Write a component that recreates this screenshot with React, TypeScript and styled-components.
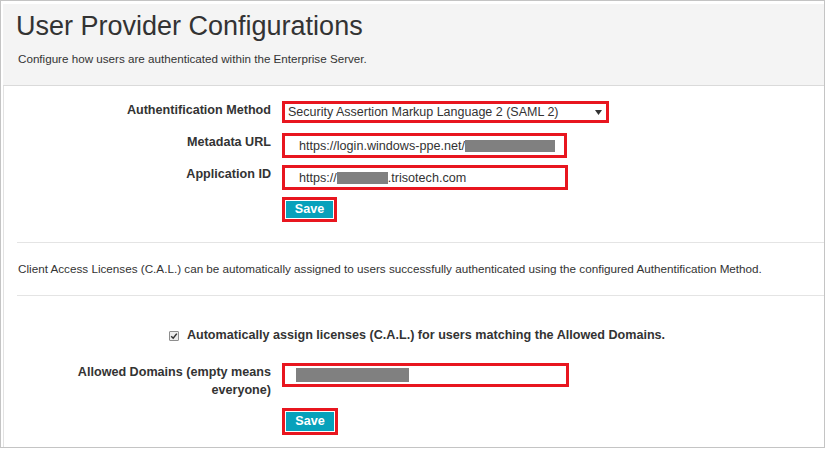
import React from "react";
import styled, { createGlobalStyle } from "styled-components";

const GlobalStyle = createGlobalStyle`
  html, body { margin: 0; padding: 0; background: #ffffff; }
  body { font-family: "Liberation Sans", Arial, Helvetica, sans-serif; color: #333333; }
  * { box-sizing: border-box; }
`;

const Frame = styled.div`
  width: 825px;
  height: 448px;
  border: 1px solid #c4c4c4;
  padding: 3px 0 0 2px;
  display: flex;
  flex-direction: column;
  overflow: hidden;
`;

const Header = styled.header`
  height: 82px;
  background: #f4f4f4;
  border-bottom: 1px solid #dadada;
  padding: 6px 15px 0 15px;
`;

const Title = styled.h1`
  margin: 0 0 0 -2px;
  font-size: 27px;
  font-weight: 400;
  line-height: 32px;
  color: #333333;
`;

const Subtitle = styled.p`
  margin: 9px 0 0 0;
  font-size: 11.65px;
  line-height: 15px;
  color: #333333;
`;

const Content = styled.main`
  flex: 1;
  border-left: 1px solid #e2e2e2;
  padding-top: 15px;
  display: flex;
  flex-direction: column;
`;

const Form = styled.div<{ $gap: number; $top?: number }>`
  display: flex;
  flex-direction: column;
  gap: ${(p) => p.$gap}px;
  margin-top: ${(p) => p.$top ?? 0}px;
`;

const Row = styled.div`
  display: grid;
  grid-template-columns: 267px 1fr;
  column-gap: 11px;
  min-height: 25px;
  align-items: start;
`;

const Label = styled.label`
  text-align: right;
  font-weight: 700;
  font-size: 12.6px;
  line-height: 18px;
  padding-left: 64px;
  color: #333333;
`;

const Field = styled.div<{ $w: number; $h?: number; $pad?: number }>`
  width: ${(p) => p.$w}px;
  height: ${(p) => p.$h ?? 25}px;
  border: 3px solid #e8161f;
  display: flex;
  align-items: center;
  padding-left: ${(p) => p.$pad ?? 14}px;
  font-size: 12.6px;
  color: #333333;
  white-space: nowrap;
  background: #ffffff;
`;

const SelectBox = styled.div<{ $w: number }>`
  width: ${(p) => p.$w}px;
  height: 22px;
  border: 3px solid #e8161f;
  display: flex;
  align-items: center;
  justify-content: space-between;
  padding: 0 4px 0 3px;
  font-size: 12.5px;
  color: #333333;
  white-space: nowrap;
  background: #ffffff;
`;

const Redacted = styled.span<{ $w: number; $h: number }>`
  display: inline-block;
  width: ${(p) => p.$w}px;
  height: ${(p) => p.$h}px;
  background: #808080;
`;

const SaveFrame = styled.div`
  display: inline-flex;
  justify-self: start;
  border: 3px solid #e8161f;
  padding: 1px;
  background: #ffffff;
`;

const SaveButton = styled.button<{ $w: number; $h: number }>`
  width: ${(p) => p.$w}px;
  height: ${(p) => p.$h}px;
  background: #07a1bb;
  color: #ffffff;
  border: none;
  padding: 0;
  font-family: inherit;
  font-weight: 700;
  font-size: 12.6px;
  line-height: 1;
  cursor: pointer;
`;

const Separator = styled.hr<{ $top: number }>`
  margin: ${(p) => p.$top}px 0 0 13px;
  border: none;
  border-top: 1px solid #e4e4e4;
  height: 0;
`;

const Info = styled.p`
  margin: 18px 0 0 0;
  padding-left: 14px;
  font-size: 11.7px;
  line-height: 15px;
  color: #333333;
  white-space: nowrap;
`;

const CheckRow = styled.div`
  margin-top: 32px;
  display: flex;
  align-items: center;
  justify-content: center;
  gap: 8px;
  padding-left: 6px;
  font-weight: 700;
  font-size: 12.6px;
  line-height: 15px;
  color: #333333;
  white-space: nowrap;
`;

const CheckBox = styled.span`
  width: 10px;
  height: 10px;
  border: 1px solid #8e8e8e;
  border-radius: 1px;
  background: #ececec;
  display: flex;
  align-items: center;
  justify-content: center;
`;

const Spacer = styled.div``;

export default function App() {
  return (
    <>
      <GlobalStyle />
      <Frame>
        <Header>
          <Title>User Provider Configurations</Title>
          <Subtitle>Configure how users are authenticated within the Enterprise Server.</Subtitle>
        </Header>
        <Content>
          <Form $gap={7}>
            <Row>
              <Label>Authentification Method</Label>
              <SelectBox $w={327} role="combobox">
                <span>Security Assertion Markup Language 2 (SAML 2)</span>
                <svg width="7" height="5" viewBox="0 0 7 5">
                  <polygon points="0,0 7,0 3.5,5" fill="#333" />
                </svg>
              </SelectBox>
            </Row>
            <Row>
              <Label>Metadata URL</Label>
              <Field $w={285}>
                <span>https://login.windows-ppe.net/</span>
                <Redacted $w={90} $h={12} />
              </Field>
            </Row>
            <Row>
              <Label>Application ID</Label>
              <Field $w={286}>
                <span>https://</span>
                <Redacted $w={51} $h={12} />
                <span>.trisotech.com</span>
              </Field>
            </Row>
            <Row>
              <Spacer />
              <SaveFrame>
                <SaveButton $w={47} $h={17}>Save</SaveButton>
              </SaveFrame>
            </Row>
          </Form>
          <Separator $top={20} />
          <Info>
            Client Access Licenses (C.A.L.) can be automatically assigned to users successfully authenticated using the configured Authentification Method.
          </Info>
          <Separator $top={19} />
          <CheckRow>
            <CheckBox>
              <svg width="8" height="8" viewBox="0 0 8 8">
                <path d="M1.2 4.2 L3.2 6.2 L6.8 1.6" fill="none" stroke="#333" strokeWidth="1.5" />
              </svg>
            </CheckBox>
            <span>Automatically assign licenses (C.A.L.) for users matching the Allowed Domains.</span>
          </CheckRow>
          <Form $gap={9} $top={20}>
            <Row>
              <Label>Allowed Domains (empty means everyone)</Label>
              <Field $w={287} $h={24} $pad={11}>
                <Redacted $w={113} $h={14} />
              </Field>
            </Row>
            <Row>
              <Spacer />
              <SaveFrame>
                <SaveButton $w={48} $h={19}>Save</SaveButton>
              </SaveFrame>
            </Row>
          </Form>
        </Content>
      </Frame>
    </>
  );
}
